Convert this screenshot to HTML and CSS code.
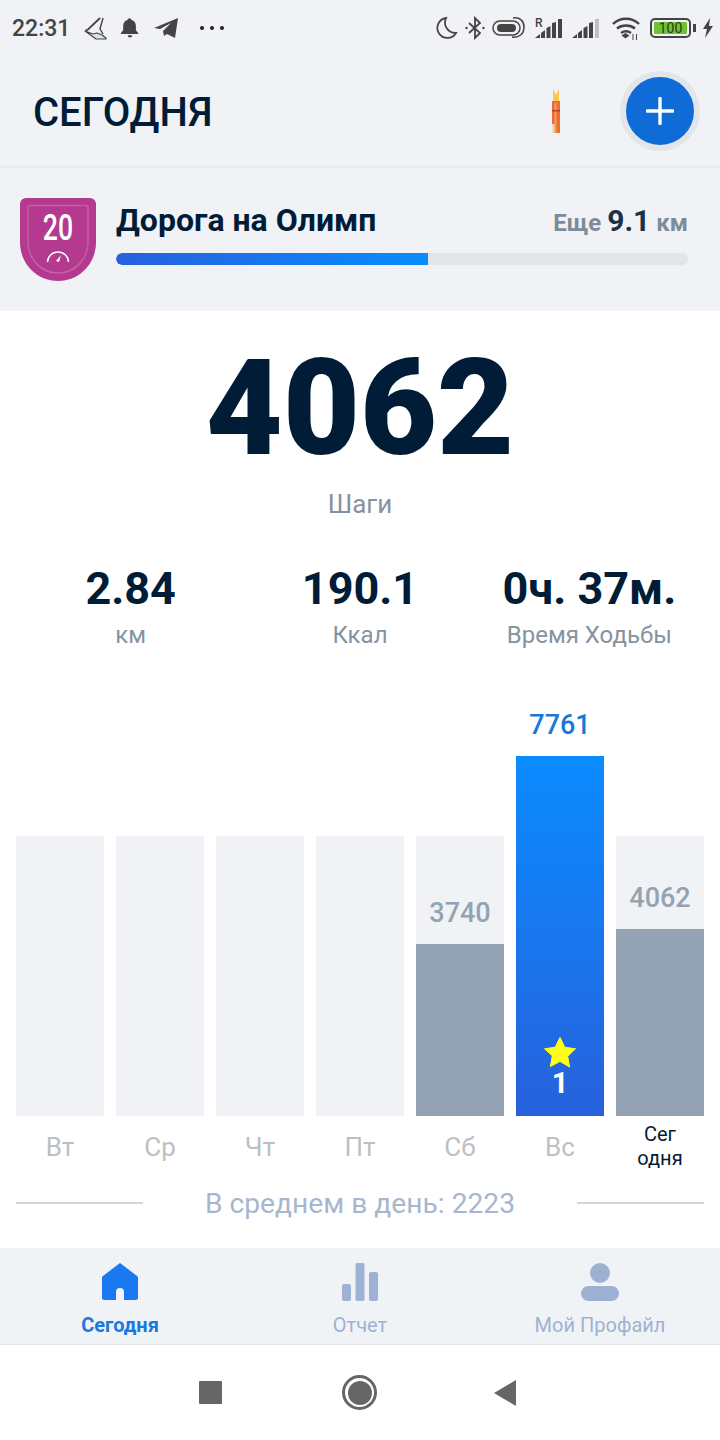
FILE: index.html
```html
<!DOCTYPE html>
<html lang="ru">
<head>
    <meta charset="UTF-8">
    <meta name="viewport" content="width=device-width, initial-scale=1.0">
    <title>Сегодня</title>
    <link rel="stylesheet" href="styles.css">
</head>
<body>
    <div class="app">
        <div class="status-bar">
            <div class="status-left">
                <span class="clock">22:31</span>
                <svg class="ic-shoe" width="23" height="26" viewBox="0 0 23 26" fill="none" stroke="#444"><path d="M16 3 4 14.500l-2.500 1" stroke-width="1.800"/><path d="M19 3l-3 11 3 5" stroke-width="1.400"/><path d="M1 16l8 3 4-1 5 2 4 3v1H12z" fill="#dfe2e6" stroke-width="1.200" stroke-linejoin="round"/></svg>
                <svg class="ic-bell" width="20" height="24" viewBox="0 0 22 24" fill="#444"><path d="M11 1.500c1 0 1.700.7 1.700 1.700 3.300.8 4.800 3.300 4.800 6.800v4.500l2.500 3v1H1v-1l2.500-3V10c0-3.500 1.500-6 4.800-6.800 0-1 .7-1.700 1.700-1.700z"/><path d="M8.500 20h5c0 1.500-1 2.500-2.500 2.500S8.500 21.500 8.500 20z"/></svg>
                <svg class="ic-plane" width="24" height="22" viewBox="0 0 24 22"><path d="M0 11 24 1l-3 20-8-4-3 2-1-5 8-8-11 6z" fill="#444"/></svg>
                <div class="dots"><i></i><i></i><i></i></div>
            </div>
            <div class="status-right">
                <svg class="ic-moon" width="24" height="26" viewBox="0 0 24 26" fill="none" stroke="#444" stroke-width="1.800"><path d="M12 3a10 10 0 1 0 10 15A10.500 10.500 0 0 1 12 3z"/></svg>
                <svg class="ic-bt" width="20" height="24" viewBox="0 0 20 24" fill="none" stroke="#444" stroke-width="1.800"><path d="M4 7l11 10-5 5V2l5 5L4 17"/><circle cx="1.500" cy="12" r="1.200" fill="#444" stroke="none"/><circle cx="18.500" cy="12" r="1.200" fill="#444" stroke="none"/></svg>
                <svg class="ic-vibrate" width="34" height="24" viewBox="0 0 34 24" fill="none" stroke="#444" stroke-width="1.500"><rect x="1" y="5" width="27" height="14" rx="7"/><rect x="5" y="8" width="19" height="8" rx="4" fill="#444" stroke="none"/><path d="M21 2c7-1 11 3 11 9 0 7-5 11-12 10"/></svg>
                <svg class="ic-signal-r" width="28" height="22" viewBox="0 0 28 22" fill="#444"><path d="M0 21h5v-4zM6 21h4v-8l-4 3zM11.500 21h4V9l-4 2zM17 21h4V5l-4 1zM23 21h4V2h-4z"/><text x="0" y="10" class="r-mark">R</text></svg>
                <svg class="ic-signal" width="28" height="22" viewBox="0 0 28 22" fill="#444"><path d="M0 21h5v-4zM6 21h4v-8l-4 3zM11.500 21h4V9l-4 2zM17 21h4V5l-4 1z"/><path d="M23 21h4V2h-4z" fill="#bdbfc2"/></svg>
                <svg class="ic-wifi" width="30" height="26" viewBox="0 0 30 26" fill="none" stroke="#444" stroke-width="2.400"><path d="M2 9c7-7 19-7 26 0M6 13.500c5-4 13-4 18 0M10 18c3-2 7-2 10 0"/><path d="M10.500 20.500l4-2.500 4 2.500-4 3z" fill="#444" stroke="none"/><path d="M22 19v6M25.500 19v6" stroke-width="1"/></svg>
                <div class="battery"><div class="battery-body"><span>100</span></div><div class="battery-cap"></div></div>
                <svg class="ic-bolt" width="12" height="22" viewBox="0 0 12 22" fill="#444"><path d="M8 1 1 12h4l-2 9 8-12H7z"/></svg>
            </div>
        </div>

        <header class="top-bar">
            <h1>СЕГОДНЯ</h1>
            <div class="top-actions">
                <svg class="torch" width="10" height="44" viewBox="0 0 10 44"><path d="M2 0l3 6 3-6v14H2z" fill="#f7c84e"/><rect x="1" y="12" width="8" height="32" fill="#ee6a3c"/><rect x="3.500" y="14" width="2" height="30" fill="#f5a33c"/><rect x="1" y="21" width="8" height="1.500" fill="#b8402a"/><rect x="1" y="35" width="2.500" height="9" fill="#e9dcc0"/></svg>
                <button class="add-btn" type="button">
                    <svg width="30" height="30" viewBox="0 0 30 30" fill="#fff"><rect x="13.300" y="1" width="3.400" height="28" rx="1"/><rect x="1" y="13.300" width="28" height="3.400" rx="1"/></svg>
                </button>
            </div>
        </header>

        <section class="challenge">
            <div class="badge">
                <svg width="76" height="84" viewBox="0 0 76 84">
                    <path d="M6 0h64a6 6 0 0 1 6 6v38c0 22-17 39-38 39S0 66 0 44V6a6 6 0 0 1 6-6z" fill="#b33a8e"/>
                    <path d="M10 7.500h56a2 2 0 0 1 2 2V44c0 17-13 31-30 31S8 61 8 44V9.500a2 2 0 0 1 2-2z" fill="none" stroke="#c65ea8" stroke-width="1.500"/>
                    <path d="M27.500 64a10.500 10 0 0 1 21 0" fill="none" stroke="#fff" stroke-width="1.500"/>
                    <path d="M36 63l5-6-2 7z" fill="#fff"/>
                </svg>
                <span class="badge-num">20</span>
            </div>
            <div class="challenge-info">
                <div class="challenge-row">
                    <span class="challenge-name">Дорога на Олимп</span>
                    <span class="challenge-left">Еще <b>9.1</b> км</span>
                </div>
                <div class="progress"><div class="progress-fill" style="width: 54.500%"></div></div>
            </div>
        </section>

        <main class="today">
            <div class="steps">4062</div>
            <div class="steps-label">Шаги</div>

            <div class="stats">
                <div class="stat"><div class="stat-value">2.84</div><div class="stat-label">км</div></div>
                <div class="stat"><div class="stat-value">190.1</div><div class="stat-label">Ккал</div></div>
                <div class="stat"><div class="stat-value">0ч. 37м.</div><div class="stat-label">Время Ходьбы</div></div>
            </div>

            <div class="chart">
                <div class="day"><div class="bar"></div><div class="day-label">Вт</div></div>
                <div class="day"><div class="bar"></div><div class="day-label">Ср</div></div>
                <div class="day"><div class="bar"></div><div class="day-label">Чт</div></div>
                <div class="day"><div class="bar"></div><div class="day-label">Пт</div></div>
                <div class="day">
                    <div class="bar"><span class="bar-value">3740</span><div class="bar-fill" style="height: 172px"></div></div>
                    <div class="day-label">Сб</div>
                </div>
                <div class="day">
                    <span class="best-value">7761</span>
                    <div class="bar bar-best">
                        <svg width="34" height="32" viewBox="0 0 34 32"><path d="M17 1.500l4.800 9.800 10.700 1.500-7.800 7.500 1.900 10.700L17 25.400 7.400 30.500l1.900-10.700L1.500 12.800l10.700-1.500z" fill="#ffff14" stroke="#ffff14" stroke-linejoin="round"/></svg>
                        <span class="best-rank">1</span>
                    </div>
                    <div class="day-label">Вс</div>
                </div>
                <div class="day">
                    <div class="bar"><span class="bar-value">4062</span><div class="bar-fill" style="height: 187px"></div></div>
                    <div class="day-label day-now">Сег<br>одня</div>
                </div>
            </div>

            <div class="average">
                <span class="average-line"></span>
                <span class="average-text">В среднем в день: 2223</span>
                <span class="average-line"></span>
            </div>
        </main>

        <nav class="tabs">
            <div class="tab tab-active">
                <svg width="38" height="40" viewBox="0 0 38 40"><path d="M19 1 36 14a2 2 0 0 1 1 2v20a2 2 0 0 1-2 2H23V30a4 4 0 0 0-8 0v8H3a2 2 0 0 1-2-2V16a2 2 0 0 1 1-2z" fill="#1a78f0"/></svg>
                <span>Сегодня</span>
            </div>
            <div class="tab">
                <svg width="38" height="40" viewBox="0 0 38 40" fill="#9db2d3"><rect x="1" y="22" width="9" height="17" rx="2"/><rect x="14.500" y="1" width="9" height="38" rx="2"/><rect x="28" y="10" width="9" height="29" rx="2"/></svg>
                <span>Отчет</span>
            </div>
            <div class="tab">
                <svg width="38" height="40" viewBox="0 0 38 40" fill="#9db2d3"><circle cx="19" cy="11" r="10"/><rect x="0" y="24" width="38" height="15" rx="7.500"/></svg>
                <span>Мой Профайл</span>
            </div>
        </nav>

        <div class="nav-bar">
            <div class="nav-square"></div>
            <div class="nav-circle"><div></div></div>
            <svg width="24" height="28" viewBox="0 0 24 28"><path d="M23 1v26L1 14z" fill="#666"/></svg>
        </div>
    </div>
</body>
</html>
```

FILE: styles.css
```css
* {
    box-sizing: border-box;
}
body {
    margin: 0;
    font-family: 'Roboto', sans-serif;
    background-color: #fff;
    color: #011c36;
}
.app {
    width: 720px;
    height: 1440px;
    display: flex;
    flex-direction: column;
    overflow: hidden;
}

/* status bar */
.status-bar {
    height: 56px;
    background-color: #f0f2f6;
    display: flex;
    justify-content: space-between;
    align-items: center;
    padding: 0 6px 0 12px;
    color: #444;
}
.status-left {
    display: flex;
    align-items: center;
}
.clock {
    font-size: 23px;
    font-weight: 500;
    width: 72px;
}
.ic-bell {
    margin-left: 13px;
}
.ic-plane {
    margin-left: 14px;
}
.dots {
    display: flex;
    gap: 6px;
    margin-left: 22px;
}
.dots i {
    width: 4px;
    height: 4px;
    border-radius: 50%;
    background-color: #222;
}
.status-right {
    display: flex;
    align-items: center;
}
.ic-bt,
.ic-vibrate {
    margin-left: 7px;
}
.ic-signal-r,
.ic-signal,
.battery {
    margin-left: 9px;
}
.ic-wifi {
    margin-left: 11px;
}
.ic-bolt {
    margin-left: 6px;
}
.r-mark {
    font-family: 'Roboto', sans-serif;
    font-size: 12px;
    font-weight: 500;
}
.battery {
    display: flex;
    align-items: center;
    gap: 2px;
}
.battery-body {
    width: 41px;
    height: 20px;
    border: 2px solid #444;
    border-radius: 5px;
    padding: 2px;
    display: flex;
}
.battery-body span {
    flex: 1;
    background-color: #6cc334;
    border-radius: 1px;
    font-size: 14px;
    line-height: 12px;
    text-align: center;
    color: #2f3a1f;
}
.battery-cap {
    width: 3px;
    height: 8px;
    background-color: #444;
}

/* top bar */
.top-bar {
    height: 112px;
    background-color: #f0f2f6;
    border-bottom: 2px solid #e9ebef;
    display: flex;
    justify-content: space-between;
    align-items: center;
    padding: 0 20px 0 33px;
}
.top-bar h1 {
    margin: 2px 0 0;
    font-size: 40px;
    font-weight: 500;
    color: #011c36;
}
.top-actions {
    display: flex;
    align-items: center;
    gap: 59px;
}
.add-btn {
    width: 80px;
    height: 80px;
    padding: 0;
    border: 6px solid #e2e5ea;
    border-radius: 50%;
    background-color: #0f6bd6;
    display: flex;
    align-items: center;
    justify-content: center;
}

/* challenge */
.challenge {
    height: 143px;
    background-color: #f0f2f6;
    display: flex;
    align-items: flex-start;
    gap: 20px;
    padding: 30px 32px 0 20px;
}
.badge {
    position: relative;
    width: 76px;
    height: 84px;
}
.badge-num {
    position: absolute;
    top: 9px;
    left: 0;
    right: 0;
    text-align: center;
    color: #fff;
    font-size: 36px;
    font-weight: 500;
    transform: scaleX(0.74);
}
.challenge-info {
    flex: 1;
}
.challenge-row {
    display: flex;
    justify-content: space-between;
    align-items: baseline;
    height: 55px;
    padding-top: 3px;
}
.challenge-name {
    font-size: 32px;
    font-weight: 700;
}
.challenge-left {
    font-size: 24px;
    font-weight: 700;
    color: #7e8b9a;
}
.challenge-left b {
    font-size: 30px;
    font-weight: 700;
    color: #1b3148;
}
.progress {
    height: 12px;
    background-color: #e3e5e9;
    border-radius: 6px;
    overflow: hidden;
}
.progress-fill {
    height: 100%;
    border-radius: 6px 0 0 6px;
    background: linear-gradient(to right, #2761dc, #0a8cff);
}

/* main */
.today {
    flex: 1;
    padding: 0 16px;
    text-align: center;
}
.steps {
    font-size: 133px;
    font-weight: 900;
    line-height: 162px;
    margin-top: 17px;
    color: #011c36;
}
.steps-label {
    font-size: 26px;
    line-height: 30px;
    color: #8792a0;
    margin-top: -1px;
}
.stats {
    display: grid;
    grid-template-columns: 1fr 1fr 1fr;
    margin: 44px 0 0;
}
.stat-value {
    font-size: 45px;
    font-weight: 700;
    line-height: 52px;
    color: #011c36;
}
.stat-label {
    font-size: 24px;
    line-height: 30px;
    margin-top: 5px;
    color: #8792a0;
}
.chart {
    display: flex;
    gap: 12px;
    align-items: stretch;
    height: 480px;
    margin-top: 46px;
}
.day {
    width: 88px;
    height: 100%;
    display: flex;
    flex-direction: column;
    justify-content: flex-end;
    align-items: center;
}
.bar {
    width: 88px;
    height: 280px;
    background-color: #f0f2f6;
    display: flex;
    flex-direction: column;
    justify-content: flex-end;
    align-items: center;
}
.bar-value {
    font-size: 27px;
    line-height: 30px;
    font-weight: 500;
    color: #94a3b3;
    margin-bottom: 16px;
}
.bar-fill {
    width: 100%;
    background-color: #94a3b3;
}
.best-value {
    font-size: 27px;
    line-height: 30px;
    font-weight: 500;
    color: #1a78d8;
    margin-bottom: 16px;
}
.bar-best {
    height: 360px;
    background: linear-gradient(to bottom, #0a8cff, #2761dc);
}
.best-rank {
    font-size: 29px;
    line-height: 30px;
    font-weight: 700;
    color: #fff;
    margin-bottom: 18px;
}
.day-label {
    height: 60px;
    width: 100%;
    padding-top: 16px;
    font-size: 26px;
    line-height: 30px;
    color: #bcbfc4;
}
.day-now {
    padding-top: 6px;
    font-size: 20px;
    line-height: 24px;
    color: #011c36;
}
.average {
    display: flex;
    align-items: center;
    justify-content: space-between;
    height: 40px;
    margin-top: 7px;
}
.average-line {
    width: 127px;
    height: 2px;
    background-color: #d0d5db;
}
.average-text {
    font-size: 28.2px;
    color: #a7b6cf;
}

/* tabs */
.tabs {
    height: 97px;
    background-color: #f0f3f6;
    border-bottom: 1px solid #e2e4e8;
    display: grid;
    grid-template-columns: 240px 240px 240px;
}
.tab {
    display: flex;
    flex-direction: column;
    align-items: center;
    padding-top: 14px;
    font-size: 20px;
    color: #9db2d3;
}
.tab span {
    margin-top: 11px;
    line-height: 24px;
}
.tab-active {
    color: #1a78e0;
    font-weight: 700;
}

/* nav bar */
.nav-bar {
    height: 95px;
    background-color: #fff;
    display: flex;
    align-items: center;
    padding-left: 199px;
}
.nav-square {
    width: 23px;
    height: 23px;
    border-radius: 1px;
    background-color: #666;
    margin-right: 120px;
}
.nav-circle {
    width: 35px;
    height: 35px;
    border: 3px solid #666;
    border-radius: 50%;
    display: flex;
    align-items: center;
    justify-content: center;
    margin-right: 116px;
}
.nav-circle div {
    width: 24px;
    height: 24px;
    border-radius: 50%;
    background-color: #666;
}
```
